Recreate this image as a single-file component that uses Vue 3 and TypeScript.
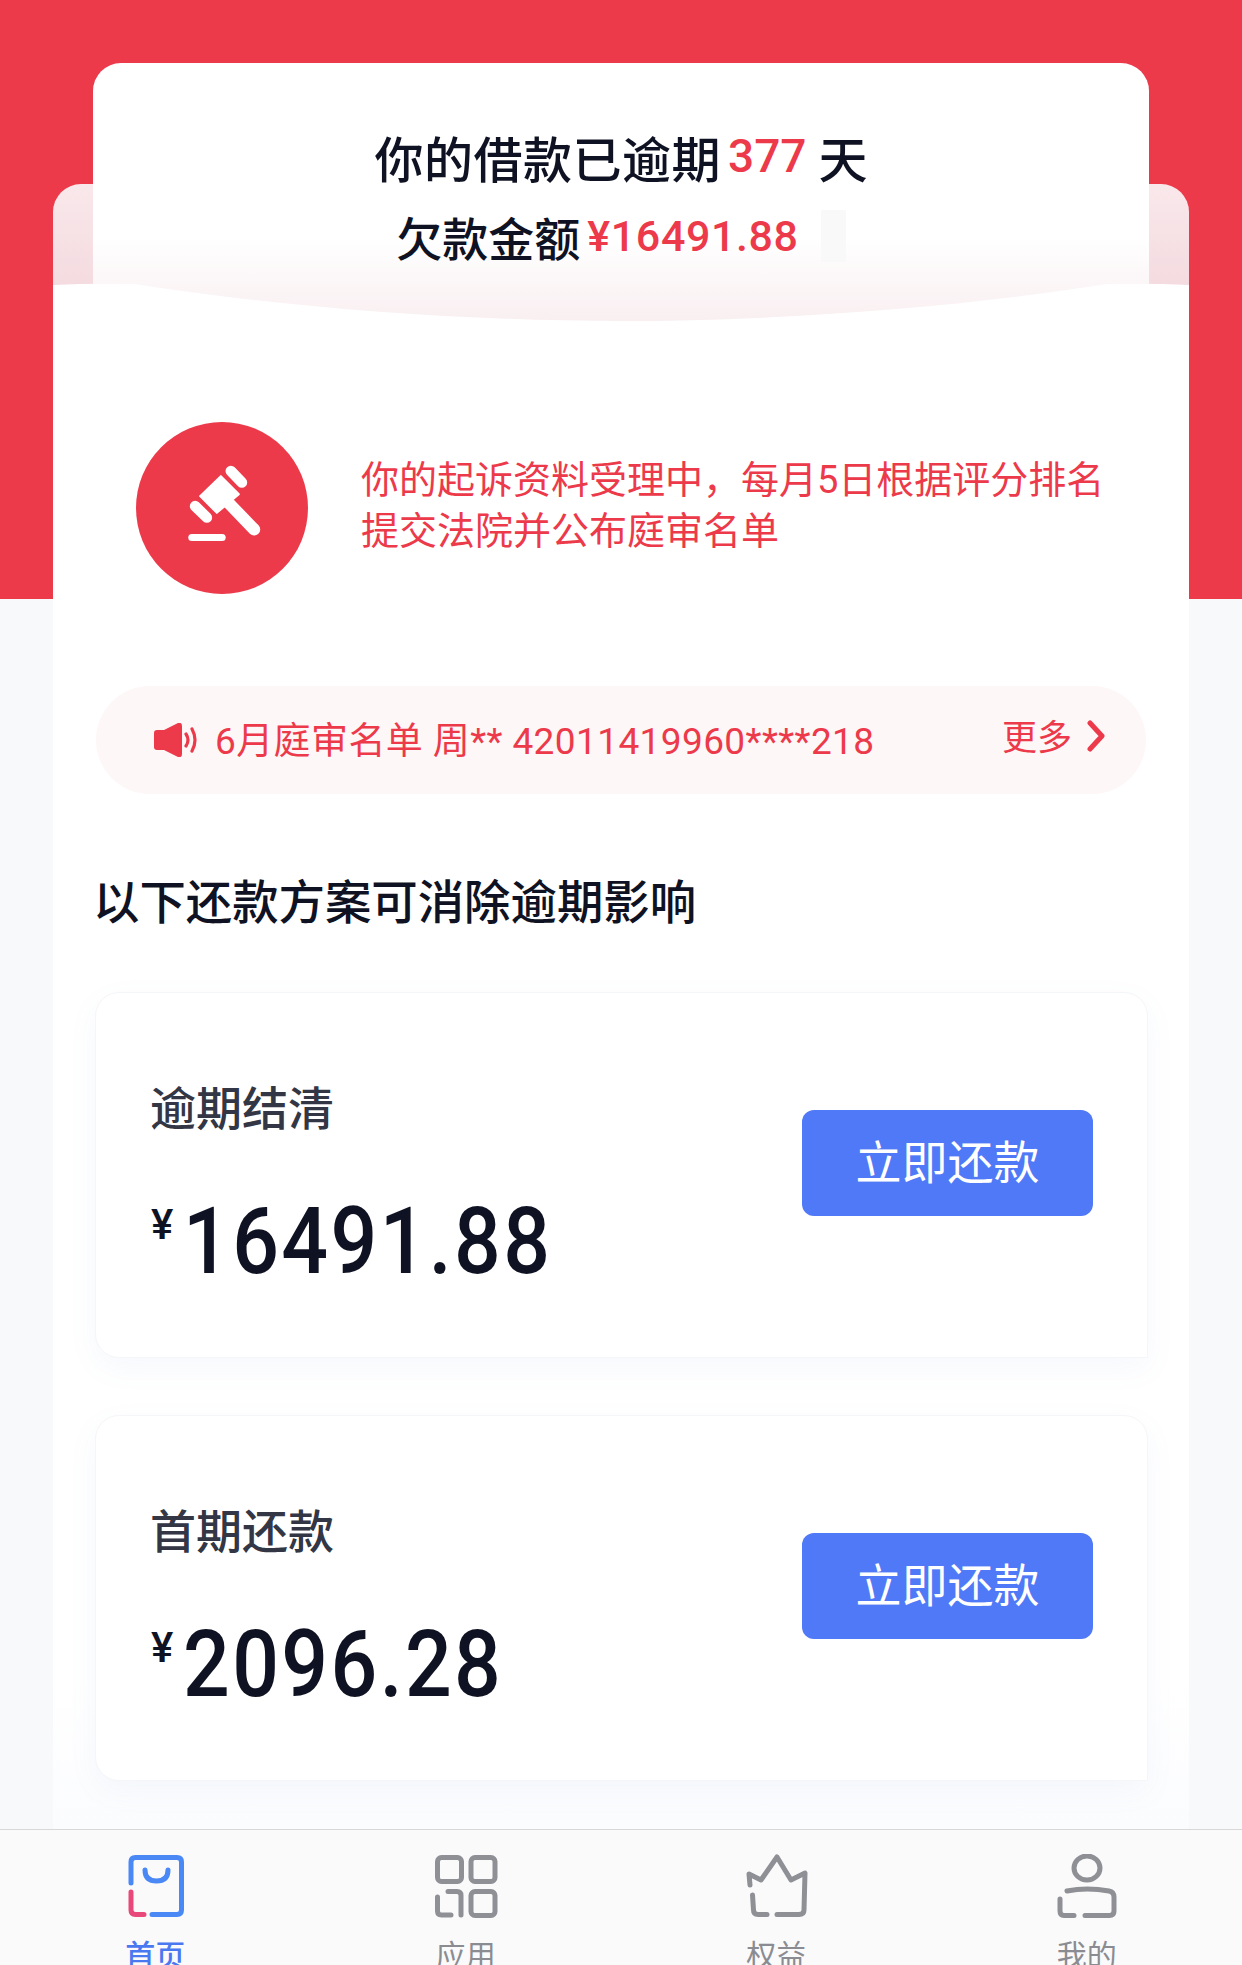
<template>
  <div class="page">
    <main class="panel">
      <section class="letter">
        <div class="letter-line letter-line--first">
          <span class="letter-lead">你的借款已逾期</span>
          <em class="days">377</em>
          <span>天</span>
        </div>
        <div class="letter-line letter-line--second">
          <span>欠款金额</span>
          <em class="debt">¥16491.88</em>
          <i class="letter-blank"></i>
        </div>
      </section>
      <svg class="wave" width="1136" height="50" viewBox="0 0 1136 50">
        <path d="M0 5 Q40 3 82 4 C220 26 400 41 568 41 C736 41 916 26 1054 4 Q1096 3 1136 5 V50 H0 Z" fill="#fff" />
      </svg>

      <div class="body">
        <div class="notice">
          <svg class="notice-icon" width="172" height="172" viewBox="108 66 515 515">
            <circle cx="365.5" cy="323.5" r="257.5" fill="#ec3a4b" />
            <g fill="none" stroke="#fff" stroke-linecap="round">
              <path d="M392 213 L425 247" stroke-width="32" />
              <path d="M285 318 L320 352" stroke-width="32" />
              <path d="M385 308 L462 388" stroke-width="36" />
              <path d="M275 412 H366" stroke-width="21" />
            </g>
            <path d="M300 288 L362 228 L416 282 L350 338 Z" fill="#fff" stroke="#fff" stroke-width="6" stroke-linejoin="round" />
          </svg>
          <p class="notice-text">你的起诉资料受理中，每月5日根据评分排名<br />提交法院并公布庭审名单</p>
        </div>

        <div class="ticker">
          <svg class="ticker-icon" width="44" height="34" viewBox="0 0 44 34">
            <path d="M0 10 Q0 7 3 7 H10 L24 0 Q28 -1 28 3 V31 Q28 35 24 34 L10 27 H3 Q0 27 0 24 Z" fill="#ec3a4b" />
            <path d="M32 11 Q36 17 32 23 M38 6 Q44 17 38 28" fill="none" stroke="#ec3a4b" stroke-width="3.2" stroke-linecap="round" />
          </svg>
          <span class="ticker-text">6月庭审名单 周** 42011419960****218</span>
          <span class="ticker-more">更多</span>
          <svg class="ticker-arrow" width="20" height="32" viewBox="0 0 20 32">
            <path d="M4 3 L16 16 L4 29" fill="none" stroke="#ec3a4b" stroke-width="5" stroke-linecap="round" stroke-linejoin="round" />
          </svg>
        </div>

        <h2 class="plans-title">以下还款方案可消除逾期影响</h2>

        <div class="plans">
          <article v-for="plan in plans" :key="plan.name" class="plan">
            <div class="plan-info">
              <div class="plan-name">{{ plan.name }}</div>
              <div class="plan-amount"><sup>¥</sup><span class="plan-digits">{{ plan.amount }}</span></div>
            </div>
            <button class="plan-btn">立即还款</button>
          </article>
        </div>
      </div>
    </main>

    <nav class="tabbar">
      <div class="tab tab--active">
        <svg class="tab-icon" width="64" height="64" viewBox="0 0 64 64" fill="none" stroke-width="5" stroke-linecap="round" stroke-linejoin="round">
          <path d="M8 29 V8 Q8 3.5 12.5 3.5 H54 Q58.5 3.5 58.5 8 V56 Q58.5 60.5 54 60.5 H29" stroke="#4a88f6" />
          <path d="M8 38 V56 Q8 60.5 12.5 60.5 H21" stroke="#e8487a" />
          <path d="M22 16 Q22 27 33.5 27 Q45 27 45 16" stroke="#4a88f6" />
        </svg>
        <span>首页</span>
      </div>
      <div class="tab">
        <svg class="tab-icon" width="64" height="64" viewBox="0 0 64 64" fill="none" stroke="#8e9096" stroke-width="5" stroke-linecap="round" stroke-linejoin="round">
          <rect x="3.5" y="3.5" width="24" height="24" rx="4" />
          <rect x="37" y="3.5" width="24" height="24" rx="4" />
          <rect x="37" y="37.5" width="24" height="24" rx="4" />
          <path d="M14 37.5 H23 Q27 37.5 27 41.5 V61" />
          <path d="M3.5 43 V57 Q3.5 61 7.5 61 H17" />
        </svg>
        <span>应用</span>
      </div>
      <div class="tab">
        <svg class="tab-icon" width="64" height="64" viewBox="0 0 64 64" fill="none" stroke="#8e9096" stroke-width="5" stroke-linecap="round" stroke-linejoin="round">
          <path d="M6 31 L5 20 L17 26 L33 3 L47 26 L61 19 L60 56 Q60 60.5 55 60.5 H33" />
          <path d="M23 60.5 H14 Q9.5 60.5 9.5 56 L8.5 41" />
        </svg>
        <span>权益</span>
      </div>
      <div class="tab">
        <svg class="tab-icon" width="64" height="64" viewBox="0 0 64 64" fill="none" stroke="#8e9096" stroke-width="5" stroke-linecap="round" stroke-linejoin="round">
          <ellipse cx="32" cy="14" rx="13" ry="12" />
          <path d="M12 37 Q32 33 54 37 Q59 38 59 43 V57 Q59 61.5 54.5 61.5 H30" />
          <path d="M19 61.5 H9 Q5 61.5 5 57 V45" />
        </svg>
        <span>我的</span>
      </div>
    </nav>
  </div>
</template>

<script setup lang="ts">
interface Plan {
  name: string;
  amount: string;
}

const plans: Plan[] = [
  { name: '逾期结清', amount: '16491.88' },
  { name: '首期还款', amount: '2096.28' }
];
</script>

<style scoped>
.page {
  display: flex;
  flex-direction: column;
  height: 1965px;
  overflow: hidden;
  background: linear-gradient(#ec3a4b 599px, #f8f9fb 599px);
  font-family: Roboto, "Noto Sans CJK SC", sans-serif;
  color: #0f1222;
}

.panel {
  flex: 1;
  min-height: 0;
  margin: 184px 53px 0;
  border-radius: 28px 28px 0 0;
  background: linear-gradient(#f9e8eb, #f4dbe0 102px, #fff 102px);
}

.letter {
  height: 267px;
  margin: -121px 40px 0;
  padding-top: 53px;
  box-sizing: border-box;
  border-radius: 28px 28px 0 0;
  background: linear-gradient(#fff 175px, #f9eff1 258px);
}

.letter-line {
  display: flex;
  justify-content: center;
  align-items: center;
  height: 80px;
  font-weight: 500;
}

.letter-line em {
  font-style: normal;
  color: #ec3a4b;
}

.letter-line--first {
  font-size: 49px;
}

.letter-lead {
  letter-spacing: 0.5px;
}

.days {
  margin: 0 12px 0 7px;
  font-size: 46px;
}

.letter-line--second {
  font-size: 46px;
}

.debt {
  margin-left: 7px;
  font-size: 43px;
  letter-spacing: 0.6px;
}

.letter-blank {
  width: 25px;
  height: 52px;
  margin-left: 22px;
  background: #f9f9f9;
}

.wave {
  display: block;
  margin-top: -50px;
  position: relative;
}

.body {
  height: 1499px;
  background: linear-gradient(#fff 1350px, #fbfcfe 1499px);
  padding-top: 92px;
  box-sizing: border-box;
}

.notice {
  display: flex;
  align-items: center;
  gap: 53px;
  padding-left: 83px;
}

.notice-icon {
  flex: none;
}

.notice-text {
  margin: -4px 0 0;
  font-size: 38px;
  line-height: 51px;
  color: #ec3a4b;
}

.ticker {
  display: flex;
  align-items: center;
  width: 1050px;
  height: 108px;
  margin: 92px 0 0 43px;
  padding: 0 40px 0 58px;
  box-sizing: border-box;
  border-radius: 54px;
  background: #fdf7f7;
  color: #ec3a4b;
}

.ticker-icon {
  flex: none;
}

.ticker-text {
  margin: -4px 0 0 17px;
  font-size: 37px;
  letter-spacing: 0.4px;
  white-space: nowrap;
}

.ticker-more {
  margin-left: auto;
  margin-top: -12px;
  font-size: 35px;
}

.ticker-arrow {
  margin: -8px 0 0 14px;
}

.plans-title {
  margin: 79px 0 0 40px;
  font-size: 46.4px;
  line-height: 60px;
  font-weight: 500;
}

.plans {
  display: flex;
  flex-direction: column;
  gap: 57px;
  margin: 59px 0 0 42px;
  width: 1053px;
}

.plan {
  display: flex;
  align-items: center;
  justify-content: space-between;
  height: 366px;
  padding: 0 54px;
  box-sizing: border-box;
  border: 1px solid #f5f6f9;
  border-radius: 24px 24px 0 24px;
  background: #fff;
  box-shadow: 0 10px 30px rgba(110, 130, 210, 0.06);
}

.plan-info {
  padding-top: 20px;
}

.plan-name {
  font-size: 46px;
  line-height: 60px;
  font-weight: 500;
  color: #333644;
}

.plan-amount {
  display: flex;
  margin-top: 53px;
  line-height: 100px;
  font-weight: 500;
}

.plan-amount sup {
  margin: 13px 10px 0 1px;
  font-size: 42px;
  line-height: 40px;
}

.plan-digits {
  font-size: 93px;
  letter-spacing: 2.7px;
  transform: scaleX(0.885);
  transform-origin: left center;
}

.plan-btn {
  width: 291px;
  height: 106px;
  margin: 0 0 25px;
  padding: 0 0 8px;
  border: none;
  border-radius: 12px;
  background: #4f79f6;
  color: #fff;
  font-family: inherit;
  font-size: 46px;
}

.tabbar {
  flex: none;
  display: flex;
  height: 136px;
  overflow: hidden;
  border-top: 1px solid #d8d8d8;
  box-sizing: border-box;
  background: #fafafb;
}

.tab {
  flex: 1;
  display: flex;
  flex-direction: column;
  align-items: center;
  padding-top: 24px;
  font-size: 30px;
  line-height: 30px;
  color: #8a8c92;
}

.tab-icon {
  flex: none;
  margin-bottom: 23px;
}

.tab--active {
  color: #4a78f0;
  font-weight: 500;
}
</style>
